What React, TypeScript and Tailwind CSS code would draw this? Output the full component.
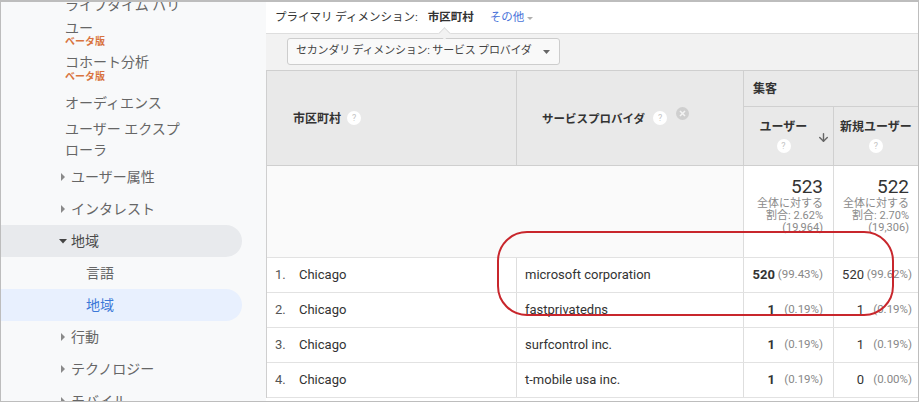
import { ArrowDown } from "lucide-react";

type Row = {
  n: number;
  city: string;
  isp: string;
  users: string;
  usersPct: string;
  fresh: string;
  freshPct: string;
};

const rows: Row[] = [
  { n: 1, city: "Chicago", isp: "microsoft corporation", users: "520", usersPct: "(99.43%)", fresh: "520", freshPct: "(99.62%)" },
  { n: 2, city: "Chicago", isp: "fastprivatedns", users: "1", usersPct: "(0.19%)", fresh: "1", freshPct: "(0.19%)" },
  { n: 3, city: "Chicago", isp: "surfcontrol inc.", users: "1", usersPct: "(0.19%)", fresh: "1", freshPct: "(0.19%)" },
  { n: 4, city: "Chicago", isp: "t-mobile usa inc.", users: "1", usersPct: "(0.19%)", fresh: "0", freshPct: "(0.00%)" },
];

function Caret({ open = false }: { open?: boolean }) {
  return open ? (
    <svg width="8" height="8" viewBox="0 0 8 8" className="shrink-0">
      <polygon points="0,2 8,2 4,6.5" fill="#444" />
    </svg>
  ) : (
    <svg width="8" height="8" viewBox="0 0 8 8" className="shrink-0">
      <polygon points="2,0 6,4 2,8" fill="#8a8a8a" />
    </svg>
  );
}

function Help() {
  return (
    <span className="inline-flex h-[14px] w-[14px] items-center justify-center rounded-full bg-white text-[9px] font-normal leading-none text-[#c4c4c4]">
      ?
    </span>
  );
}

function Remove() {
  return (
    <svg width="13" height="13" viewBox="0 0 13 13">
      <circle cx="6.5" cy="6.5" r="6.5" fill="#cfcfcf" />
      <path d="M4 4 L9 9 M9 4 L4 9" stroke="#f3f3f3" strokeWidth="1.6" />
    </svg>
  );
}

function Beta() {
  return <div className="text-[10px] font-bold leading-[12px] text-[#d9743f]">ベータ版</div>;
}

function NavRow({
  label,
  caret,
  open,
  indent,
  tone = "plain",
}: {
  label: string;
  caret?: boolean;
  open?: boolean;
  indent?: boolean;
  tone?: "plain" | "gray" | "blue";
}) {
  const bg =
    tone === "gray" ? "bg-[#e8eaed]" : tone === "blue" ? "bg-[#e8f0fe]" : "";
  const color = tone === "blue" ? "text-[#3c78d8]" : open ? "text-[#4a4a4a]" : "text-[#666]";
  return (
    <div className={`flex h-[32px] w-[241px] items-center rounded-r-full ${bg}`}>
      {caret ? (
        <div className="flex items-center gap-[4px] pl-[58px]">
          <Caret open={open} />
          <span className={`text-[14px] ${color}`}>{label}</span>
        </div>
      ) : (
        <span className={`text-[14px] ${color} ${indent ? "pl-[85px]" : "pl-[64px]"}`}>{label}</span>
      )}
    </div>
  );
}

function Sidebar() {
  return (
    <div className="w-[265px] shrink-0 overflow-hidden bg-[#f8f9fa] text-[#666]">
      <div className="mt-[-7px] pl-[64px] text-[14px] leading-[21px]">ライフタイム バリ</div>
      <div className="mt-[4px] pl-[64px]">
        <div className="text-[14px] leading-[16px]">ユー</div>
        <Beta />
      </div>
      <div className="mt-[5px] pl-[64px]">
        <div className="text-[14px] leading-[18px]">コホート分析</div>
        <Beta />
      </div>
      <div className="mt-[10px] pl-[64px] text-[14px] leading-[21px]">オーディエンス</div>
      <div className="mt-[5px] pl-[64px] text-[14px] leading-[21px]">
        ユーザー エクスプ
        <br />
        ローラ
      </div>
      <NavRow label="ユーザー属性" caret />
      <NavRow label="インタレスト" caret />
      <NavRow label="地域" caret open tone="gray" />
      <NavRow label="言語" indent />
      <NavRow label="地域" indent tone="blue" />
      <NavRow label="行動" caret />
      <NavRow label="テクノロジー" caret />
      <NavRow label="モバイル" caret />
    </div>
  );
}

function Totals({ value, pct, base, pr }: { value: string; pct: string; base: string; pr: string }) {
  return (
    <div className={`flex flex-col items-end border-l border-[#dcdcdc] bg-white pt-[10px] ${pr}`}>
      <div className="text-[19px] leading-[22px] text-[#333]">{value}</div>
      <div className="text-right text-[11px] leading-[12px] text-[#8a8a8a]">
        全体に対する
        <br />
        割合: {pct}
        <br />
        {base}
      </div>
    </div>
  );
}

function ReportTable() {
  return (
    <div className="border-l border-[#cfcfcf]">
      {/* header */}
      <div className="grid grid-cols-[250px_226px_90px_85px] grid-rows-[36px_58px] border-y border-[#cfcfcf] bg-[#e9e9e9] text-[12px] font-bold text-[#333]">
        <div className="row-span-2 flex items-start gap-[6px] border-r border-[#d0d0d0] pl-[26px] pt-[40px] leading-[16px]">
          市区町村
          <Help />
        </div>
        <div className="row-span-2 flex items-start gap-[8px] pl-[25px] pt-[40px] leading-[16px]">
          <span className="text-[11.5px]">サービスプロバイダ</span>
          <Help />
          <span className="mt-[-4px] ml-[1px]">
            <Remove />
          </span>
        </div>
        <div className="col-span-2 flex items-center border-b border-l border-[#d0d0d0] pl-[9px]">集客</div>
        <div className="relative flex flex-col items-center gap-[5px] border-l border-[#d0d0d0] pr-[10px] pt-[13px] leading-[14px]">
          ユーザー
          <Help />
          <ArrowDown size={13} strokeWidth={2.6} color="#666" className="absolute right-[3px] top-[24px]" />
        </div>
        <div className="flex flex-col items-center gap-[5px] border-l border-[#d0d0d0] pt-[13px] leading-[14px]">
          新規ユーザー
          <Help />
        </div>
      </div>

      {/* totals */}
      <div className="grid h-[91px] grid-cols-[476px_90px_85px] bg-[#fafafa]">
        <div />
        <Totals value="523" pct="2.62%" base="(19,964)" pr="pr-[10px]" />
        <Totals value="522" pct="2.70%" base="(19,306)" pr="pr-[9px]" />
      </div>

      {/* rows */}
      {rows.map((r) => (
        <div
          key={r.n}
          className="grid h-[35px] grid-cols-[250px_226px_90px_85px] border-t border-[#e2e2e2] bg-white text-[13px] text-[#333]"
        >
          <div className="flex items-center border-r border-[#dedede] pl-[8px]">
            <span className="w-[24px] text-[#555]">{r.n}.</span>
            {r.city}
          </div>
          <div className="flex items-center pl-[8px]">{r.isp}</div>
          <div className="flex items-center justify-end border-l border-[#dedede] pr-[10px]">
            <span className="font-bold">{r.users}</span>
            <span className="w-[48px] text-right text-[11.5px] text-[#888]">{r.usersPct}</span>
          </div>
          <div className="flex items-center justify-end border-l border-[#dedede] pr-[6px]">
            <span>{r.fresh}</span>
            <span className="w-[48px] text-right text-[11.5px] text-[#888]">{r.freshPct}</span>
          </div>
        </div>
      ))}
      <div className="border-t border-[#e2e2e2]" />
    </div>
  );
}

export default function App() {
  return (
    <div className="relative flex h-[402px] w-[919px] overflow-hidden border border-t-2 border-[#bdbdbd] bg-white font-['Roboto','Noto_Sans_CJK_JP',sans-serif]">
      <Sidebar />
      <div className="flex-1 overflow-hidden">
        {/* primary dimension bar */}
        <div className="relative flex h-[32px] items-center border-b border-[#dedede] pl-[9px] text-[11.5px] text-[#333]">
          <span>プライマリ ディメンション:</span>
          <span className="ml-[10px] font-bold">市区町村</span>
          <span className="ml-[16px] text-[#4a73d9]">その他</span>
          <svg width="8" height="8" viewBox="0 0 8 8" className="ml-[2px]">
            <polygon points="1,3 7,3 4,6" fill="#b0b0b0" />
          </svg>
          <div className="absolute bottom-[-5px] left-[174px] h-[9px] w-[9px] rotate-45 border-l border-t border-[#dedede] bg-[#f2f2f2]" />
        </div>
        {/* secondary dimension */}
        <div className="h-[36px] bg-[#f2f2f2] pl-[21px] pt-[4px]">
          <div className="flex h-[27px] w-[273px] items-center justify-between whitespace-nowrap rounded-[3px] border border-[#cdcdcd] bg-[#f9f9f9] pl-[8px] pr-[8px] text-[11px] tracking-[-0.2px] text-[#444]">
            <span>セカンダリ ディメンション: サービス プロバイダ</span>
            <svg width="9" height="8" viewBox="0 0 9 8" className="shrink-0">
              <polygon points="1,2 8,2 4.5,6" fill="#666" />
            </svg>
          </div>
        </div>
        <ReportTable />
      </div>
      {/* callout around the first row */}
      <div className="pointer-events-none absolute left-[496px] top-[229px] h-[85px] w-[397px] rounded-[30px] border-2 border-[#c8262c]" />
    </div>
  );
}
